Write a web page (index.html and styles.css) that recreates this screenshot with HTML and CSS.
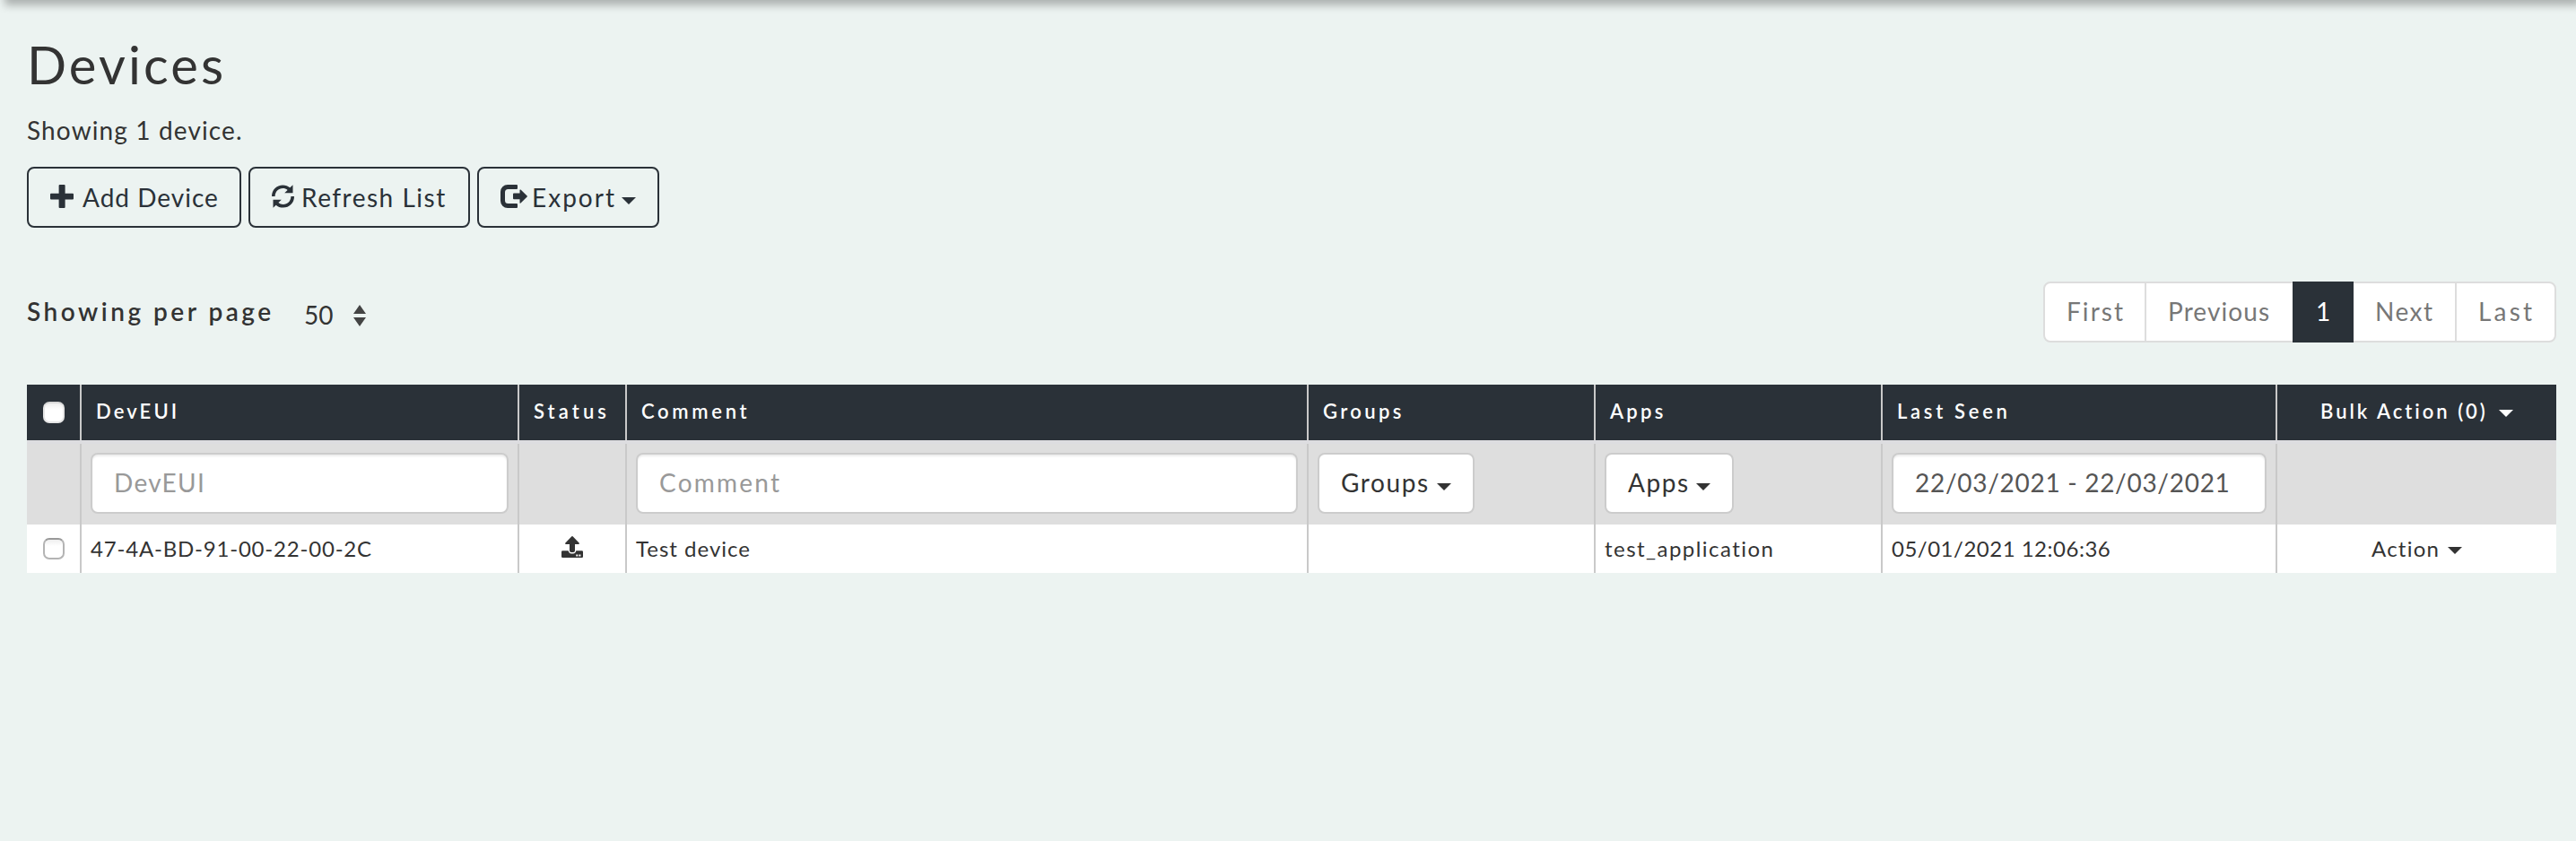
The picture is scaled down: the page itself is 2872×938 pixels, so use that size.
FILE: index.html
```html
<!DOCTYPE html>
<html lang="en">
<head>
<meta charset="utf-8">
<title>Devices</title>
<link rel="stylesheet" href="styles.css">
</head>
<body>
<div class="navbar-shadow"></div>
<main class="page">
  <h1 class="title">Devices</h1>
  <p class="summary">Showing 1 device.</p>

  <div class="actions">
    <button class="btn btn-add">
      <svg class="icon" width="26" height="26" viewBox="0 0 26 26"><path d="M10.6 0h5a1 1 0 0 1 1 1v8.7H25a1 1 0 0 1 1 1v4.8a1 1 0 0 1-1 1h-8.4V25a1 1 0 0 1-1 1h-5a1 1 0 0 1-1-1v-8.5H1a1 1 0 0 1-1-1v-4.8a1 1 0 0 1 1-1h8.6V1a1 1 0 0 1 1-1z"/></svg>
      <span class="label">Add Device</span>
    </button>
    <button class="btn btn-refresh">
      <svg class="icon" width="26" height="26" viewBox="0 0 26 26"><path d="M0 13C0 5.500 5.500 .4 12.300 .4c3.200 0 5.900 1 8 2.900L23.500.2V9.300H14.200l3.400-3.400C16.100 4.600 14.300 4 12.300 4 7.400 4 3.700 7.800 3.600 13z"/><path d="M25 13c0 7.500-5.500 12.600-12.300 12.600-3.200 0-5.900-1-8-2.900L1.500 25.800V16.700h9.300l-3.400 3.400c1.500 1.300 3.300 1.900 5.300 1.900 4.900 0 8.600-3.800 8.700-9z"/></svg>
      <span class="label">Refresh List</span>
    </button>
    <button class="btn btn-export">
      <svg class="icon" width="30" height="26" viewBox="0 0 30 26"><path d="M8 0h10a1 1 0 0 1 1 1v3a1 1 0 0 1-1 1H8.500A3.500 3.500 0 0 0 5 8.500v9A3.500 3.500 0 0 0 8.500 21H18a1 1 0 0 1 1 1v3a1 1 0 0 1-1 1H8a8 8 0 0 1-8-8V8a8 8 0 0 1 8-8z"/><path d="M15 9.500h6.500V6a.6.6 0 0 1 1-.4l7.200 7a.6.6 0 0 1 0 .8l-7.200 7.200a.6.6 0 0 1-1-.4v-4H15a1 1 0 0 1-1-1v-4.700a1 1 0 0 1 1-1z"/></svg>
      <span class="label">Export</span>
      <span class="caret"></span>
    </button>
  </div>

  <div class="toolbar">
    <div class="per-page">
      <span class="per-page-label">Showing per page</span>
      <span class="per-page-value">50</span>
      <svg class="sort" width="14" height="24" viewBox="0 0 14 24"><path d="M7 0l7 10H0zM0 14h14L7 24z"/></svg>
    </div>
    <nav class="pagination">
      <a class="page-link first">First</a>
      <a class="page-link previous">Previous</a>
      <a class="page-link current">1</a>
      <a class="page-link next">Next</a>
      <a class="page-link last">Last</a>
    </nav>
  </div>

  <div class="grid">
    <div class="row head">
      <div class="cell check"><span class="checkbox"></span></div>
      <div class="cell"><span class="th-deveui">DevEUI</span></div>
      <div class="cell"><span class="th-status">Status</span></div>
      <div class="cell"><span class="th-comment">Comment</span></div>
      <div class="cell"><span class="th-groups">Groups</span></div>
      <div class="cell"><span class="th-apps">Apps</span></div>
      <div class="cell"><span class="th-seen">Last Seen</span></div>
      <div class="cell bulk"><span class="th-bulk">Bulk Action (0)</span><span class="caret"></span></div>
    </div>
    <div class="row filters">
      <div class="cell"></div>
      <div class="cell"><div class="input"><span class="in-deveui">DevEUI</span></div></div>
      <div class="cell"></div>
      <div class="cell"><div class="input"><span class="in-comment">Comment</span></div></div>
      <div class="cell"><button class="select select-groups"><span>Groups</span><span class="caret"></span></button></div>
      <div class="cell"><button class="select select-apps"><span>Apps</span><span class="caret"></span></button></div>
      <div class="cell"><div class="input filled"><span class="in-date">22/03/2021 - 22/03/2021</span></div></div>
      <div class="cell"></div>
    </div>
    <div class="row data">
      <div class="cell check"><span class="checkbox"></span></div>
      <div class="cell"><span class="td-deveui">47-4A-BD-91-00-22-00-2C</span></div>
      <div class="cell status">
        <svg width="24" height="24" viewBox="0 0 24 24"><path d="M11.400.3a.9.900 0 0 1 1.200 0l7 7.200c.6.600.2 1.500-.6 1.500h-4v7.200a1.800 1.800 0 0 1-1.800 1.800h-2.400A1.800 1.800 0 0 1 9 16.200V9H5c-.8 0-1.200-.9-.6-1.500z"/><path d="M1.200 16.200h6.500c.2 2 1.500 3.200 3.300 3.200h2c1.800 0 3.100-1.200 3.300-3.200h6.500a1.200 1.200 0 0 1 1.200 1.200v5.400a1.200 1.200 0 0 1-1.200 1.200H1.200A1.200 1.200 0 0 1 0 22.800v-5.400a1.200 1.200 0 0 1 1.200-1.200z"/><path class="led" d="M16.300 20.600h2v2h-2zM19.400 20.600h2v2h-2z"/></svg>
      </div>
      <div class="cell"><span class="td-comment">Test device</span></div>
      <div class="cell"></div>
      <div class="cell"><span class="td-app">test_application</span></div>
      <div class="cell"><span class="td-seen">05/01/2021 12:06:36</span></div>
      <div class="cell action"><span class="td-action">Action</span><span class="caret"></span></div>
    </div>
  </div>
</main>
</body>
</html>
```
FILE: styles.css
```css
* { box-sizing: border-box; }

body {
  margin: 0;
  background: #ecf3f1;
  color: #333;
  font: 28px/40px Lato, "Open Sans", sans-serif;
  overflow: hidden;
}

.navbar-shadow {
  position: absolute;
  top: -20px;
  left: 0;
  width: 100%;
  height: 20px;
  box-shadow: 5px 6px 10px rgba(0, 0, 0, .27);
}

.page { padding: 42px 22px 0 30px; }

span, a { white-space: nowrap; }

.title {
  margin: 0;
  font-size: 58px;
  font-weight: 400;
  line-height: 60px;
  letter-spacing: 3.1px;
}

.summary { margin: 23px 0 0; letter-spacing: 1.13px; }

.caret {
  flex: none;
  border: 8px solid transparent;
  border-top-color: currentColor;
  border-bottom: 0;
}

/* Action buttons */
.actions { display: flex; gap: 8px; margin-top: 21px; }

.btn {
  display: flex;
  align-items: center;
  height: 68px;
  padding: 0 24px;
  border: 2px solid #2a3138;
  border-radius: 8px;
  background: transparent;
  color: #2a3138;
  font: inherit;
}
.btn .icon { flex: none; fill: currentColor; margin-top: -2px; }
.btn .label { margin-top: -1px; }
.btn .caret { margin: 7px 0 0 auto; }
.btn-add { width: 239px; letter-spacing: 1px; }
.btn-add .label { margin-left: 10px; }
.btn-refresh { width: 247px; letter-spacing: 1.5px; }
.btn-refresh .label { margin-left: 7px; }
.btn-export { width: 203px; letter-spacing: 2.02px; }
.btn-export .label { margin-left: 5px; }

/* Page size and pagination */
.toolbar {
  display: flex;
  justify-content: space-between;
  height: 68px;
  margin-top: 60px;
}
.per-page { display: flex; align-items: center; }
.per-page-label { width: 309px; margin-top: -2px; font-weight: 600; letter-spacing: 3.5px; }
.per-page-value { width: 55px; padding-top: 6px; }
.sort { margin-top: 8px; fill: #444; }

.pagination {
  display: flex;
  border: 2px solid #ddd;
  border-radius: 8px;
  background: #fff;
  color: #777;
}
.page-link {
  display: flex;
  align-items: center;
  padding: 0 0 2px 24px;
  border-right: 2px solid #ddd;
}
.first { width: 113px; letter-spacing: 2.07px; }
.previous { width: 163px; border-right: 0; letter-spacing: 1.1px; }
.current {
  width: 68px;
  margin: -2px 0;
  padding-left: 26px;
  border-right: 0;
  background: #2a3138;
  color: #fff;
}
.next { width: 115px; letter-spacing: 1.5px; }
.last { width: 109px; border-right: 0; letter-spacing: 3.19px; }

/* Device table */
.grid { margin-top: 47px; }
.row {
  display: grid;
  grid-template-columns: 61px 488px 120px 760px 320px 320px 440px 311px;
}
.cell {
  display: flex;
  align-items: center;
  padding: 0 10px;
  border-right: 2px solid #c9c9c9;
}
.cell:last-child { border-right: 0; }
.row .check { padding-left: 18px; }

.checkbox {
  flex: none;
  width: 24px;
  height: 24px;
  border: 2px solid #b4b4b4;
  border-top-color: #999;
  border-radius: 7px;
  background: linear-gradient(#efefef, #fff 35%);
}

.head {
  height: 62px;
  background: #2a3138;
  color: #fff;
  font-size: 22px;
  font-weight: 600;
}
.head .cell { padding: 0 16px 2px; }
.head .check { padding: 0 0 0 18px; }
.head .checkbox { border-color: #d8d8d8 #e6e6e6 #e6e6e6; }
.th-deveui { letter-spacing: 3.12px; }
.th-status { letter-spacing: 4.1px; }
.th-comment { letter-spacing: 3.7px; }
.th-groups { letter-spacing: 3.35px; }
.th-apps { letter-spacing: 3.3px; }
.th-seen { letter-spacing: 3.71px; }
.th-bulk { letter-spacing: 2.99px; }
.head .bulk { padding: 0 48px 2px; }
.bulk .caret { margin-left: auto; margin-top: 4px; }

.filters { height: 94px; border-top: 4px solid #dddde0; background: #dedede; }
.filters .cell { align-items: flex-start; padding-top: 10px; }
.input, .select {
  display: flex;
  align-items: center;
  height: 68px;
  border: 2px solid #ccc;
  border-radius: 8px;
  background: #fff;
  font: inherit;
}
.input {
  width: 100%;
  padding: 0 24px 2px;
  color: #999;
  box-shadow: inset 0 2px 2px rgba(0, 0, 0, .075);
}
.filled { color: #555; }
.select { padding: 0 24px 2px; color: #333; }
.select .caret { margin: 9px 0 0 auto; }
.in-deveui { letter-spacing: 1.31px; }
.in-comment { letter-spacing: 2.24px; }
.in-date { letter-spacing: .71px; }
.select-groups { width: 175px; letter-spacing: 1.59px; }
.select-apps { width: 144px; letter-spacing: 1.57px; }

.data { height: 54px; background: #fff; font-size: 24px; }
.status { padding-left: 47px; }
.status svg { margin-top: -4px; fill: #333; }
.status .led { fill: #fff; }
.td-deveui { letter-spacing: .8px; }
.td-comment { letter-spacing: 1px; }
.td-app { letter-spacing: 1.46px; }
.td-seen { letter-spacing: .5px; }
.td-action { letter-spacing: 1.24px; }
.data .action { padding: 0 105px; }
.action .caret { margin-left: auto; margin-top: 3px; }
```
